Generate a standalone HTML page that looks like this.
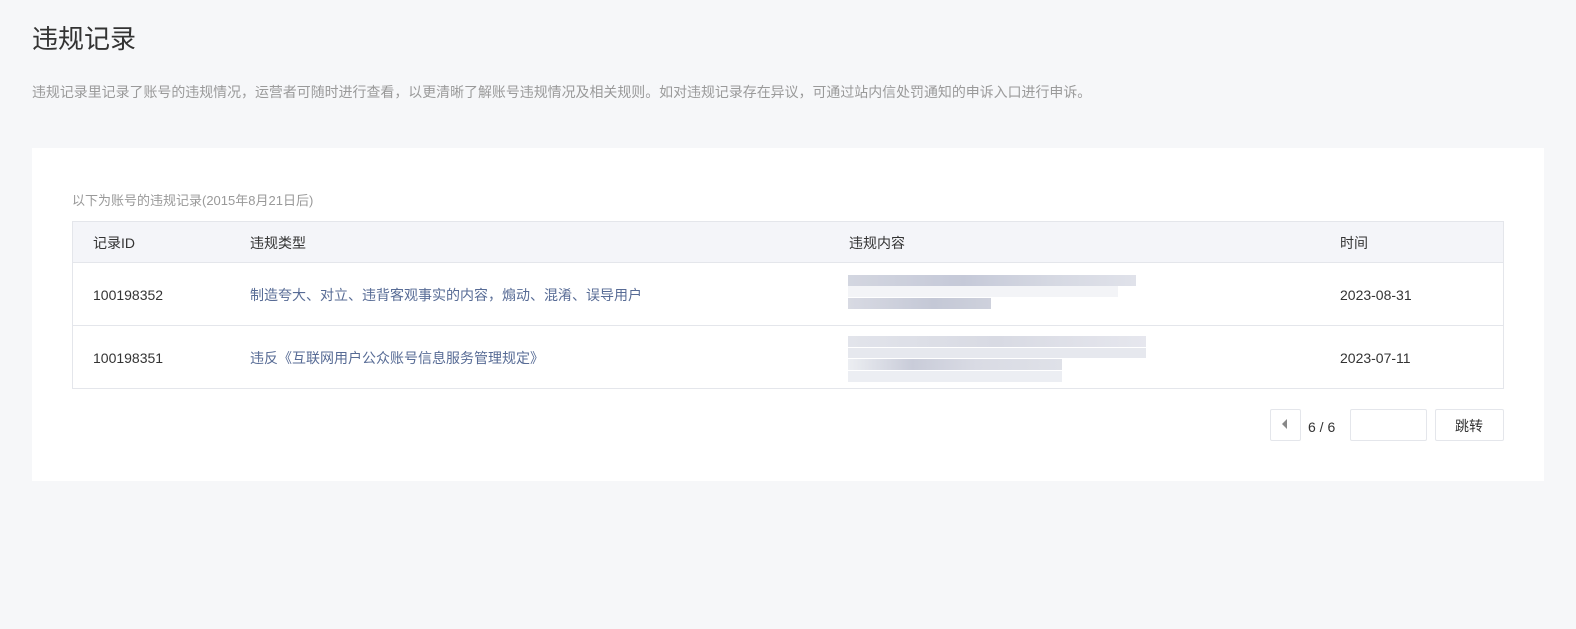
<!DOCTYPE html>
<html><head><meta charset="utf-8"><style>
body{margin:0;width:1576px;height:629px;background:#f6f7f9;font-family:"Liberation Sans","Noto Sans CJK SC",sans-serif;position:relative;overflow:hidden}
.a{position:absolute;white-space:nowrap}
h1{position:absolute;left:32px;top:19px;margin:0;font-size:26px;font-weight:normal;color:#333}
.card{position:absolute;left:32px;top:148px;width:1512px;height:333px;background:#fff}
.tbl{position:absolute;left:72px;top:221px;width:1430px;height:166px;border:1px solid #e4e6eb}
.hd{position:absolute;left:0;top:0;width:100%;height:40px;background:#f4f5f9;border-bottom:1px solid #e4e6eb}
.ln{position:absolute;left:0;top:103px;width:100%;height:1px;background:#e4e6eb}
.t{font-size:14px;color:#333}
.b{position:absolute}
</style></head><body>
<h1>违规记录</h1>
<div class="a" style="left:32px;top:82px;font-size:13.95px;color:#9a9a9a">违规记录里记录了账号的违规情况，运营者可随时进行查看，以更清晰了解账号违规情况及相关规则。如对违规记录存在异议，可通过站内信处罚通知的申诉入口进行申诉。</div>
<div class="card"></div>
<div class="a" style="left:72px;top:190px;font-size:13px;color:#999">以下为账号的违规记录(2015年8月21日后)</div>
<div class="tbl"><div class="hd"></div><div class="ln"></div></div>
<div class="a t" style="left:93px;top:233px">记录ID</div>
<div class="a t" style="left:250px;top:233px">违规类型</div>
<div class="a t" style="left:849px;top:233px">违规内容</div>
<div class="a t" style="left:1340px;top:233px">时间</div>
<div class="a t" style="left:93px;top:287px">100198352</div>
<div class="a" style="left:250px;top:285px;font-size:14px;color:#576b95">制造夸大、对立、违背客观事实的内容，煽动、混淆、误导用户</div>
<div class="a t" style="left:1340px;top:287px">2023-08-31</div>
<div class="a t" style="left:93px;top:350px">100198351</div>
<div class="a" style="left:250px;top:348px;font-size:14px;color:#576b95">违反《互联网用户公众账号信息服务管理规定》</div>
<div class="a t" style="left:1340px;top:350px">2023-07-11</div>
<div class="b" style="left:848px;top:275px;width:288px;height:11px;background:linear-gradient(90deg,#d3d6e0,#c5c9d8 40%,#d5d8e2 70%,#e0e2ea)"></div>
<div class="b" style="left:848px;top:286px;width:270px;height:11px;background:#f3f4f7"></div>
<div class="b" style="left:848px;top:298px;width:143px;height:11px;background:linear-gradient(90deg,#d8dae3,#c4c8d6 60%,#ced1dc)"></div>
<div class="b" style="left:848px;top:336px;width:298px;height:11px;background:linear-gradient(90deg,#e2e4eb,#d8dae3 50%,#e6e7ee)"></div>
<div class="b" style="left:848px;top:348px;width:298px;height:10px;background:#e6e8ee"></div>
<div class="b" style="left:848px;top:359px;width:214px;height:11px;background:linear-gradient(90deg,#eceef2,#c9ccd9 30%,#d9dbe4 60%,#dfe1e8)"></div>
<div class="b" style="left:848px;top:371px;width:214px;height:11px;background:#eceef3"></div>
<div class="b" style="left:1270px;top:409px;width:29px;height:30px;border:1px solid #e4e6eb;border-radius:2px;background:#fff"></div>
<div class="b" style="left:1282px;top:419px;width:0;height:0;border-top:5px solid transparent;border-bottom:5px solid transparent;border-right:5px solid #888"></div>
<div class="a t" style="left:1308px;top:419px">6 / 6</div>
<div class="b" style="left:1350px;top:409px;width:75px;height:30px;border:1px solid #e4e6eb;border-radius:2px;background:#fff"></div>
<div class="b" style="left:1435px;top:409px;width:67px;height:30px;border:1px solid #e4e6eb;border-radius:2px;background:#fff"></div>
<div class="a" style="left:1455px;top:416px;font-size:14px;color:#333">跳转</div>
</body></html>
